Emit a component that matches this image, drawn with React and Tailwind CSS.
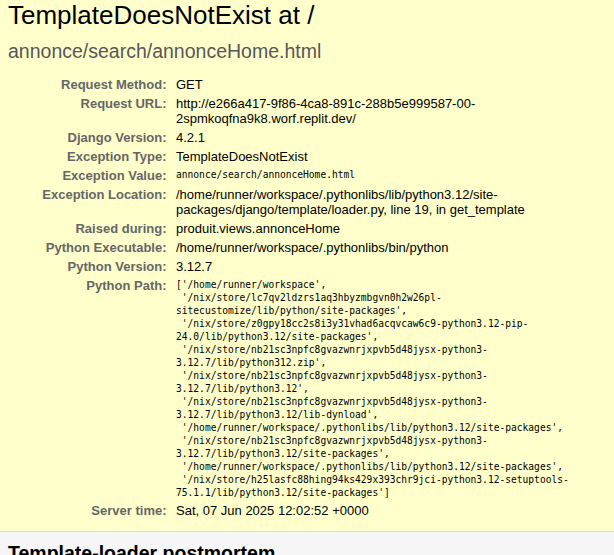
import React from 'react';

const MONO = "font-['DejaVu_Sans_Mono','Liberation_Mono',monospace] text-[9.6px] leading-[13px] whitespace-pre";

const PYTHON_PATH = [
  "['/home/runner/workspace',",
  " '/nix/store/lc7qv2ldzrs1aq3hbyzmbgvn0h2w26pl-",
  "sitecustomize/lib/python/site-packages',",
  " '/nix/store/z0gpy18cc2s8i3y31vhad6acqvcaw6c9-python3.12-pip-",
  "24.0/lib/python3.12/site-packages',",
  " '/nix/store/nb21sc3npfc8gvazwnrjxpvb5d48jysx-python3-",
  "3.12.7/lib/python312.zip',",
  " '/nix/store/nb21sc3npfc8gvazwnrjxpvb5d48jysx-python3-",
  "3.12.7/lib/python3.12',",
  " '/nix/store/nb21sc3npfc8gvazwnrjxpvb5d48jysx-python3-",
  "3.12.7/lib/python3.12/lib-dynload',",
  " '/home/runner/workspace/.pythonlibs/lib/python3.12/site-packages',",
  " '/nix/store/nb21sc3npfc8gvazwnrjxpvb5d48jysx-python3-",
  "3.12.7/lib/python3.12/site-packages',",
  " '/home/runner/workspace/.pythonlibs/lib/python3.12/site-packages',",
  " '/nix/store/h25lasfc88hing94ks429x393chr9jci-python3.12-setuptools-",
  "75.1.1/lib/python3.12/site-packages']",
];

const ROWS = [
  ['Request Method:', ['GET']],
  ['Request URL:', ['http://e266a417-9f86-4ca8-891c-288b5e999587-00-', '2spmkoqfna9k8.worf.replit.dev/']],
  ['Django Version:', ['4.2.1']],
  ['Exception Type:', ['TemplateDoesNotExist']],
  ['Exception Value:', ['annonce/search/annonceHome.html'], true],
  ['Exception Location:', ['/home/runner/workspace/.pythonlibs/lib/python3.12/site-', 'packages/django/template/loader.py, line 19, in get_template']],
  ['Raised during:', ['produit.views.annonceHome']],
  ['Python Executable:', ['/home/runner/workspace/.pythonlibs/bin/python']],
  ['Python Version:', ['3.12.7']],
  ['Python Path:', PYTHON_PATH, true],
  ['Server time:', ['Sat, 07 Jun 2025 12:02:52 +0000']],
];

export default function App() {
  return (
    <div className="min-h-screen bg-white text-black text-[13px] font-['Liberation_Sans',Arial,sans-serif]">
      <header className="bg-[#ffc] border-b border-[#ddd] px-2 pb-[11px]">
        <h1 className="text-[26px] leading-[normal] font-normal">TemplateDoesNotExist at /</h1>
        <pre className="mt-[9px] mb-[12px] text-[19.5px] leading-[normal] text-[#575757] font-['Liberation_Sans',Arial,sans-serif]">annonce/search/annonceHome.html</pre>
        <table className="border-collapse">
          <tbody>
            {ROWS.map(([label, lines, mono]) => (
              <tr key={label}>
                <th className="w-[165px] min-w-[165px] pl-[3px] pr-[6.5px] py-[2px] align-top text-right font-bold text-[#666] leading-[15px] whitespace-nowrap">{label}</th>
                <td className="px-[3px] py-[2px] align-top">
                  {mono ? (
                    <pre className={MONO}>{lines.join('\n')}</pre>
                  ) : (
                    lines.map(l => <div key={l} className="leading-[15px] whitespace-nowrap">{l}</div>)
                  )}
                </td>
              </tr>
            ))}
          </tbody>
        </table>
      </header>
      <section className="bg-[#f6f6f6] px-2 py-[10px] border-b border-[#ddd]">
        <h2 className="text-[19.5px] leading-[normal] font-bold">Template-loader postmortem</h2>
        <p className="mt-3">Django tried loading these templates, in this order:</p>
      </section>
    </div>
  );
}
